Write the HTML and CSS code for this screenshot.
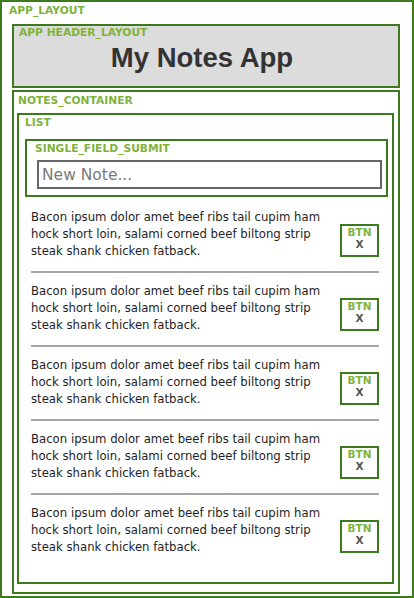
FILE: index.html
```html
<!DOCTYPE html>
<html>
<head>
<meta charset="utf-8">
<link rel="stylesheet" href="styles.css">
</head>
<body>
<div class="app">
  <div class="label label-app">APP_LAYOUT</div>
  <div class="header">
    <div class="label">APP HEADER_LAYOUT</div>
    <h1 class="title">My Notes App</h1>
  </div>
  <div class="notes">
    <div class="label">NOTES_CONTAINER</div>
    <div class="list">
      <div class="label">LIST</div>
      <div class="form">
        <div class="label">SINGLE_FIELD_SUBMIT</div>
        <input class="field" type="text" placeholder="New Note...">
      </div>
      <div class="items">
        <div class="item">
          <p class="text">Bacon ipsum dolor amet beef ribs tail cupim ham hock short loin, salami corned beef biltong strip steak shank chicken fatback.</p>
          <div class="btn"><span class="btn-label">BTN</span><span class="btn-x">X</span></div>
        </div>
        <div class="item">
          <p class="text">Bacon ipsum dolor amet beef ribs tail cupim ham hock short loin, salami corned beef biltong strip steak shank chicken fatback.</p>
          <div class="btn"><span class="btn-label">BTN</span><span class="btn-x">X</span></div>
        </div>
        <div class="item">
          <p class="text">Bacon ipsum dolor amet beef ribs tail cupim ham hock short loin, salami corned beef biltong strip steak shank chicken fatback.</p>
          <div class="btn"><span class="btn-label">BTN</span><span class="btn-x">X</span></div>
        </div>
        <div class="item">
          <p class="text">Bacon ipsum dolor amet beef ribs tail cupim ham hock short loin, salami corned beef biltong strip steak shank chicken fatback.</p>
          <div class="btn"><span class="btn-label">BTN</span><span class="btn-x">X</span></div>
        </div>
        <div class="item">
          <p class="text">Bacon ipsum dolor amet beef ribs tail cupim ham hock short loin, salami corned beef biltong strip steak shank chicken fatback.</p>
          <div class="btn"><span class="btn-label">BTN</span><span class="btn-x">X</span></div>
        </div>
      </div>
    </div>
  </div>
</div>
</body>
</html>
```

FILE: styles.css
```css
* { box-sizing: border-box; }
html, body { margin: 0; padding: 0; background: #fff; }
body { font-family: "DejaVu Sans", sans-serif; }

.app {
  width: 414px;
  height: 598px;
  border: 2px solid #3d7a1e;
  padding: 2px 0 0 10px;
}

.label {
  font-family: "DejaVu Sans", sans-serif;
  font-weight: bold;
  font-size: 10.7px;
  line-height: 13px;
  height: 13px;
  color: #80b23a;
  white-space: nowrap;
}
.label-app { margin-left: -3px; }

.header {
  margin-top: 7px;
  width: 388px;
  height: 64px;
  border: 2px solid #3d7a1e;
  background: #dcdcdc;
  padding: 0 0 0 5px;
}
.title {
  margin: 3px 0 0 0;
  padding-right: 13px;
  text-align: center;
  font-family: "Liberation Sans", Arial, sans-serif;
  font-weight: bold;
  font-size: 27.5px;
  line-height: 32px;
  color: #333;
}

.notes {
  margin-top: 2px;
  width: 388px;
  height: 504px;
  border: 2px solid #3d7a1e;
  padding: 2px 0 0 4px;
}

.list {
  margin: 6px 0 0 -1px;
  width: 377px;
  height: 471px;
  border: 2px solid #3d7a1e;
  padding: 1px 0 0 6px;
}

.form {
  margin: 10px 0 0 0;
  width: 363px;
  height: 58px;
  border: 2px solid #3d7a1e;
  padding: 1px 0 0 8px;
}
.field {
  display: block;
  margin: 5px 0 0 2px;
  width: 345px;
  height: 29px;
  border: 2px solid #666;
  padding: 0 0 0 3px;
  font-family: "DejaVu Sans", sans-serif;
  font-size: 15.5px;
  color: #333;
  background: #fff;
  outline: none;
}
.field::placeholder { color: #7a7a7a; opacity: 1; }

.items {
  margin: 2px 0 0 6px;
  width: 348px;
}
.item {
  display: flex;
  align-items: flex-start;
  padding: 10px 0 11px 0;
  border-bottom: 2px solid #a6a6a6;
}
.item:last-child { border-bottom: none; }
.text {
  margin: 0;
  width: 300px;
  font-family: "DejaVu Sans", sans-serif;
  font-size: 11.7px;
  line-height: 17px;
  color: #1e1e26;
}
.btn {
  margin: 15px 0 0 auto;
  width: 39px;
  height: 33px;
  border: 2px solid #3d7a1e;
  display: flex;
  flex-direction: column;
  align-items: center;
  font-family: "DejaVu Sans", sans-serif;
  font-weight: bold;
  font-size: 10.5px;
  line-height: 12px;
}
.btn-label { color: #80b23a; }
.btn-x { color: #555; }
```
